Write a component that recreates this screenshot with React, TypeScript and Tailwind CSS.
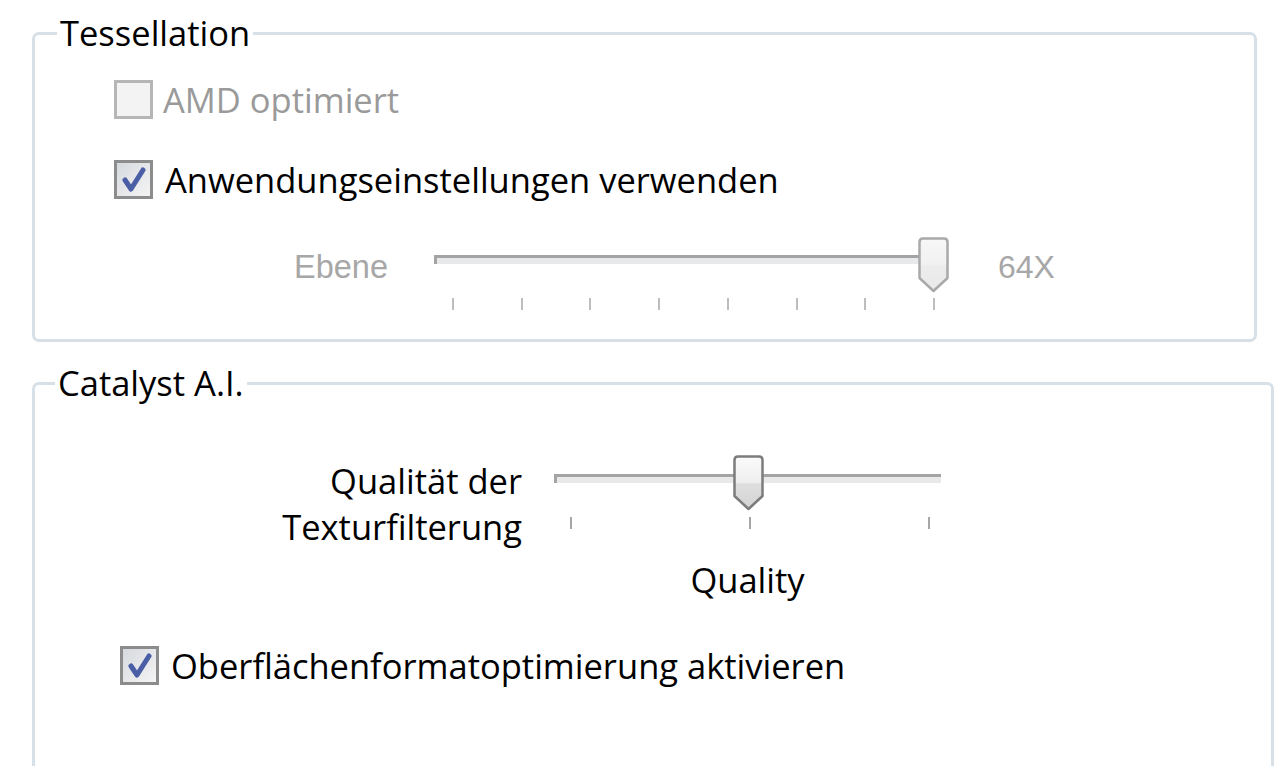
import React from "react";

const Thumb = ({ disabled }: { disabled?: boolean }) => {
  const stroke = disabled ? "#a9a9a9" : "#7c7c7c";
  const id = disabled ? "tg1" : "tg2";
  return (
    <svg width="31" height="56" viewBox="0 0 31 56">
      <defs>
        <linearGradient id={id} x1="0" y1="0" x2="0" y2="1">
          <stop offset="0" stopColor={disabled ? "#f7f7f7" : "#fbfbfb"} />
          <stop offset="0.5" stopColor={disabled ? "#f1f1f1" : "#eeeeee"} />
          <stop offset="0.52" stopColor={disabled ? "#ececec" : "#dedede"} />
          <stop offset="1" stopColor={disabled ? "#e9e9e9" : "#d4d4d4"} />
        </linearGradient>
      </defs>
      <path
        d="M1.5 5 Q1.5 1.5 5 1.5 H26 Q29.5 1.5 29.5 5 V41 L15.5 54 L1.5 41 Z"
        fill={`url(#${id})`}
        stroke={stroke}
        strokeWidth="2.5"
        strokeLinejoin="round"
      />
    </svg>
  );
};

const Checkbox = ({ checked, disabled }: { checked?: boolean; disabled?: boolean }) => (
  <div
    className={
      "w-[39px] h-[39px] shrink-0 border-[3px] " +
      (disabled
        ? "border-[#b6b6b6] bg-[#f3f3f3]"
        : "border-[#8c8c8c] bg-gradient-to-br from-[#d6d9de] to-[#f4f4f4]")
    }
  >
    {checked && (
      <svg width="33" height="33" viewBox="0 0 33 33">
        <path
          d="M8 17 L14 26 L26 7"
          fill="none"
          stroke="#4a5ea6"
          strokeWidth="5"
          strokeLinecap="round"
          strokeLinejoin="round"
        />
      </svg>
    )}
  </div>
);

const Track = ({ className }: { className?: string }) => (
  <div
    className={
      "absolute h-[9px] border-t-[3px] border-l-[3px] border-[#a4a4a4] bg-[#e7e9ea] " +
      (className || "")
    }
  />
);

export default function App() {
  return (
    <div
      className="w-[1280px] h-[766px] overflow-hidden bg-white text-black"
      style={{ fontFamily: '"Open Sans", "Noto Sans", sans-serif' }}
    >
      {/* Tessellation */}
      <fieldset className="mt-[15px] ml-[32px] w-[1225px] h-[327px] border-[3px] border-[#d7e0e7] rounded-[7px] p-0 m-0">
        <legend className="ml-[22px] px-[3px] text-[34.5px] leading-[36px]">Tessellation</legend>

        <div className="mt-[29px] ml-[79px] h-[39px] flex items-center">
          <Checkbox disabled />
          <span className="ml-[10px] text-[34.5px] leading-[36px] text-[#9a9a9a]">AMD optimiert</span>
        </div>

        <div className="mt-[41px] ml-[79px] h-[39px] flex items-center">
          <Checkbox checked />
          <span className="ml-[12px] text-[34.5px] leading-[36px]">Anwendungseinstellungen verwenden</span>
        </div>

        <div className="mt-[38px] ml-[259px] flex">
          <div
            className="w-[140px] mt-[12px] text-[32.5px] leading-[36px] text-[#a7a7a7]"
            style={{ fontFamily: '"Liberation Sans", Arial, sans-serif' }}
          >
            Ebene
          </div>
          <div className="relative w-[514px] h-[75px]">
            <Track className="left-0 top-[18px] w-[500px]" />
            <div className="absolute left-[18px] top-[61px] w-[483px] h-[12px] flex justify-between">
              {Array.from({ length: 8 }).map((_, i) => (
                <div key={i} className="w-[2px] h-[12px] bg-[#bdbdbd]" />
              ))}
            </div>
            <div className="absolute left-[484px] top-0">
              <Thumb disabled />
            </div>
          </div>
          <div
            className="ml-[50px] mt-[12px] text-[32px] leading-[36px] text-[#a7a7a7]"
            style={{ fontFamily: '"Liberation Sans", Arial, sans-serif' }}
          >
            64X
          </div>
        </div>
      </fieldset>

      {/* Catalyst A.I. */}
      <fieldset className="mt-[23px] ml-[32px] w-[1242px] h-[500px] border-[3px] border-[#d7e0e7] rounded-[7px] p-0 m-0">
        <legend className="ml-[20px] px-[3px] text-[34.5px] leading-[36px]">Catalyst A.I.</legend>

        <div className="mt-[57px] flex">
          <div className="w-[487px] text-right text-[34.5px] leading-[46px]">
            Qualität der
            <br />
            Texturfilterung
          </div>
          <div className="relative ml-[32px] w-[387px] h-[92px]">
            <Track className="left-0 top-[16px] w-[387px]" />
            <div className="absolute left-[16px] top-[59px] w-[360px] h-[12px] flex justify-between">
              {Array.from({ length: 3 }).map((_, i) => (
                <div key={i} className="w-[2px] h-[12px] bg-[#a6a6a6]" />
              ))}
            </div>
            <div className="absolute left-[179px] top-[-3px]">
              <Thumb />
            </div>
          </div>
        </div>

        <div className="mt-[12px] ml-[519px] w-[387px] text-center text-[34.5px] leading-[36px]">Quality</div>

        <div className="mt-[48px] ml-[85px] h-[39px] flex items-center">
          <Checkbox checked />
          <span className="ml-[12px] text-[34.5px] leading-[36px]">Oberflächenformatoptimierung aktivieren</span>
        </div>
      </fieldset>
    </div>
  );
}
